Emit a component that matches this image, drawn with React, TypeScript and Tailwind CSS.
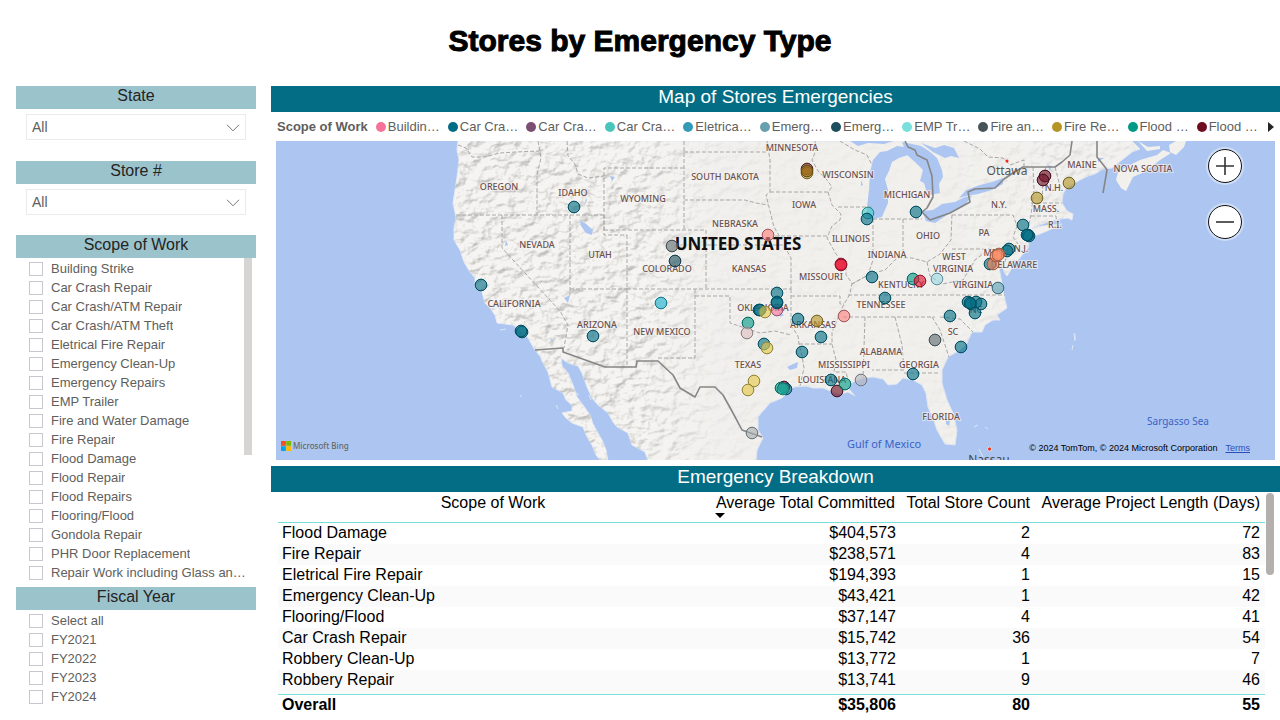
import React from "react";

type Dot = [number, number, string];
type Label = [number, number, string];

const TEAL = "#026d84";
const GOLD = "#b59525";
const YELLOW = "#e6c846";
const GREEN = "#019a86";
const NAVY = "#1b4d5c";
const WINE = "#6e0d20";
const GREY = "#5f6b6d";

const legend = [
  { name: "Buildin…", color: "#f5739a" },
  { name: "Car Cra…", color: TEAL },
  { name: "Car Cra…", color: "#7b4f71" },
  { name: "Car Cra…", color: "#4ac5bb" },
  { name: "Eletrica…", color: "#3599b8" },
  { name: "Emerg…", color: "#689fb0" },
  { name: "Emerg…", color: NAVY },
  { name: "EMP Tr…", color: "#79dfdb" },
  { name: "Fire an…", color: "#475457" },
  { name: "Fire Re…", color: GOLD },
  { name: "Flood …", color: GREEN },
  { name: "Flood …", color: WINE },
];

const scopes = [
  "Building Strike",
  "Car Crash Repair",
  "Car Crash/ATM Repair",
  "Car Crash/ATM Theft",
  "Eletrical Fire Repair",
  "Emergency Clean-Up",
  "Emergency Repairs",
  "EMP Trailer",
  "Fire and Water Damage",
  "Fire Repair",
  "Flood Damage",
  "Flood Repair",
  "Flood Repairs",
  "Flooring/Flood",
  "Gondola Repair",
  "PHR Door Replacement",
  "Repair Work including Glass an…",
];

const years = ["Select all", "FY2021", "FY2022", "FY2023", "FY2024"];

const rows = [
  ["Flood Damage", "$404,573", "2", "72"],
  ["Fire Repair", "$238,571", "4", "83"],
  ["Eletrical Fire Repair", "$194,393", "1", "15"],
  ["Emergency Clean-Up", "$43,421", "1", "42"],
  ["Flooring/Flood", "$37,147", "4", "41"],
  ["Car Crash Repair", "$15,742", "36", "54"],
  ["Robbery Clean-Up", "$13,772", "1", "7"],
  ["Robbery Repair", "$13,741", "9", "46"],
];

const labels: Label[] = [
  [499, 190, "OREGON"],
  [573, 196, "IDAHO"],
  [643, 202, "WYOMING"],
  [537, 248, "NEVADA"],
  [600, 258, "UTAH"],
  [667, 272, "COLORADO"],
  [514, 307, "CALIFORNIA"],
  [597, 328, "ARIZONA"],
  [662, 335, "NEW MEXICO"],
  [725, 180, "SOUTH DAKOTA"],
  [792, 151, "MINNESOTA"],
  [848, 178, "WISCONSIN"],
  [804, 208, "IOWA"],
  [735, 227, "NEBRASKA"],
  [749, 272, "KANSAS"],
  [821, 280, "MISSOURI"],
  [763, 311, "OKLAHOMA"],
  [748, 368, "TEXAS"],
  [813, 328, "ARKANSAS"],
  [822, 383, "LOUISIANA"],
  [844, 368, "MISSISSIPPI"],
  [881, 355, "ALABAMA"],
  [919, 368, "GEORGIA"],
  [941, 420, "FLORIDA"],
  [953, 335, "SC"],
  [976, 313, "NC"],
  [881, 308, "TENNESSEE"],
  [901, 288, "KENTUCKY"],
  [973, 288, "VIRGINIA"],
  [954, 260, "WEST"],
  [953, 272, "VIRGINIA"],
  [851, 242, "ILLINOIS"],
  [887, 258, "INDIANA"],
  [928, 239, "OHIO"],
  [907, 198, "MICHIGAN"],
  [984, 236, "PA"],
  [999, 208, "N.Y."],
  [991, 256, "MD"],
  [1021, 252, "N.J."],
  [1014, 268, "DELAWARE"],
  [1055, 228, "R.I."],
  [1046, 212, "MASS."],
  [1054, 191, "N.H."],
  [1082, 168, "MAINE"],
  [1143, 172, "NOVA SCOTIA"],
];

const dots: Dot[] = [
  [574, 207, TEAL],
  [672, 246, GREY],
  [675, 261, NAVY],
  [481, 285, TEAL],
  [522, 332, TEAL],
  [521, 331, TEAL],
  [593, 336, TEAL],
  [661, 303, "#18b0cc"],
  [807, 169, "#7a2a1c"],
  [807, 173, GOLD],
  [807, 171, "#9a6414"],
  [768, 235, "#fd8080"],
  [868, 213, "#41cdc6"],
  [867, 219, TEAL],
  [916, 212, TEAL],
  [841, 264, "#e8102e"],
  [841, 265, "#e8102e"],
  [872, 277, TEAL],
  [885, 298, TEAL],
  [913, 279, GREEN],
  [920, 281, "#e8102e"],
  [937, 279, "#9bd9e4"],
  [777, 310, "#f5739a"],
  [777, 293, TEAL],
  [777, 303, TEAL],
  [777, 302, TEAL],
  [759, 310, TEAL],
  [760, 310, TEAL],
  [765, 312, YELLOW],
  [748, 323, GREEN],
  [747, 333, "#dfbfbf"],
  [764, 344, TEAL],
  [767, 348, YELLOW],
  [798, 319, TEAL],
  [817, 321, GOLD],
  [821, 337, TEAL],
  [844, 316, "#fd8080"],
  [802, 352, TEAL],
  [754, 381, YELLOW],
  [748, 390, YELLOW],
  [784, 387, WINE],
  [786, 389, TEAL],
  [781, 388, GREEN],
  [783, 389, "#2ab5a4"],
  [831, 380, TEAL],
  [837, 391, WINE],
  [845, 384, GREEN],
  [861, 380, "#b4b4bc"],
  [752, 433, "#a8adae"],
  [913, 374, TEAL],
  [935, 340, GREY],
  [950, 316, TEAL],
  [961, 347, TEAL],
  [968, 302, TEAL],
  [976, 302, TEAL],
  [971, 304, TEAL],
  [970, 303, TEAL],
  [981, 304, TEAL],
  [975, 313, TEAL],
  [998, 288, "#5b9fb3"],
  [1023, 225, TEAL],
  [1028, 235, TEAL],
  [1029, 236, TEAL],
  [1027, 235, TEAL],
  [1009, 249, TEAL],
  [1007, 251, TEAL],
  [990, 264, TEAL],
  [993, 264, "#fd7f50"],
  [999, 254, "#fd7f50"],
  [996, 256, "#fd7f50"],
  [998, 255, "#fd9570"],
  [1045, 176, WINE],
  [1043, 180, WINE],
  [1069, 183, GOLD],
  [1037, 198, GOLD],
];

const LAND =
  "M458 141 L457 150 L459 160 L457 177 L455 190 L453 203 L456 217 L454 228 L454 240 L460 250 L464 262 L470 272 L475 278 L475 287 L482 292 L485 303 L490 308 L495 315 L497 323 L513 325 L521 331 L528 338 L535 350 L540 356 L543 363 L548 372 L552 387 L563 393 L566 400 L572 405 L572 411 L562 413 L566 418 L572 423 L583 427 L587 437 L592 445 L596 455 L601 461 L608 461 L606 450 L602 440 L598 433 L593 424 L590 415 L583 405 L577 397 L573 385 L568 373 L562 366 L561 358 L568 363 L578 366 L582 373 L587 387 L592 398 L598 405 L608 413 L613 422 L617 427 L628 433 L632 445 L645 452 L648 461 L756 461 L757 450 L763 438 L758 430 L758 417 L762 412 L770 403 L782 398 L788 392 L794 387 L806 386 L813 388 L823 388 L833 392 L840 394 L848 392 L855 396 L848 388 L853 382 L863 378 L873 377 L883 379 L888 385 L897 384 L903 378 L913 380 L922 385 L926 393 L928 407 L933 418 L937 430 L945 444 L955 445 L957 430 L953 413 L947 400 L942 383 L942 370 L948 357 L960 350 L967 343 L972 332 L982 332 L985 325 L993 320 L1000 320 L997 315 L1007 308 L1005 300 L1003 290 L1001 278 L998 262 L1001 255 L1004 272 L1007 276 L1012 268 L1010 260 L1018 260 L1028 248 L1030 238 L1047 231 L1062 224 L1042 226 L1032 228 L1050 221 L1060 219 L1068 218 L1072 220 L1073 214 L1067 211 L1062 203 L1063 194 L1067 187 L1080 180 L1088 176 L1095 174 L1103 169 L1112 168 L1122 160 L1132 152 L1140 149 L1132 141 Z";

const NOVA =
  "M1116 180 L1121 188 L1126 191 L1133 177 L1142 173 L1150 168 L1160 160 L1171 153 L1163 150 L1157 155 L1150 157 L1140 160 L1126 167 L1118 172 Z M1169 145 L1176 141 L1186 141 L1184 147 L1176 155 L1170 152 Z M1138 141 L1148 147 L1160 146 L1160 149 L1147 151 Z";

const LAKES =
  "M867 207 L869 190 L870 172 L873 160 L880 152 L887 151 L897 146 L912 148 L908 155 L899 158 L892 162 L889 171 L885 179 L888 190 L888 203 L882 217 L873 219 L867 216 Z M902 142 L912 144 L921 146 L929 151 L937 158 L942 170 L943 177 L939 184 L940 193 L930 195 L926 190 L924 183 L920 181 L923 170 L915 162 L907 155 Z M921 143 L935 148 L944 145 L954 148 L959 158 L951 156 L945 158 L933 152 Z M922 211 L933 210 L942 204 L955 202 L965 197 L972 196 L964 206 L953 211 L944 217 L935 223 L926 221 Z M959 198 L966 190 L980 185 L992 182 L1003 178 L1003 184 L992 190 L978 194 L966 196 Z M850 141 L893 141 L884 144 L868 143 L858 146 Z M861 180 L863 185 L861 186 Z M580 220 L586 224 L593 230 L592 235 L586 233 L581 226 Z M610 176 L615 177 L612 181 Z M506 240 L508 245 L505 246 Z M584 207 L587 200 L586 198 Z M564 298 L570 295 L568 303 Z M550 338 L553 340 L552 343 Z M787 367 L790 370 L797 368 L798 362 L793 364 Z M779 312 L784 315 L780 317 Z M946 419 L950 421 L949 426 L946 424 Z M1050 171 L1052 166 L1047 165 Z M1098 162 L1104 158 L1098 158 Z";

const STATES =
  "M458 145 L466 148 L472 157 L484 157 L500 153 L516 152 L539 151 M538 141 L541 158 L537 175 L537 215 M456 215 H604 M567 141 L568 156 L575 164 L578 174 L588 178 L604 176 M604 230 V168 H684 M604 215 V235 H627 M604 230 H706 V289 M684 141 V230 M684 152 H766 M684 200 H745 L756 203 L768 205 M767 141 L770 160 L770 192 L766 195 L769 207 L774 227 L780 237 M770 192 H828 L832 187 L827 180 L818 171 L812 160 L816 150 L815 141 M828 192 L832 205 L841 214 L840 220 L832 226 L827 238 L836 254 L846 266 L846 275 L852 283 L850 294 L843 306 L838 318 L832 332 L832 344 L836 360 L834 372 H846 L848 380 M838 207 H873 M775 236 H827 M707 245 H784 L791 258 V289 M570 215 V295 M502 215 V248 L560 311 L568 325 L564 348 M570 289 H627 M627 235 V367 M627 289 H791 M695 289 V358 H656 M695 296 H730 V323 L745 328 L760 333 L775 331 L791 335 M791 289 V325 L798 336 L799 344 L802 356 L804 368 L800 386 M799 344 H832 M791 296 H840 L840 304 H844 M843 317 H935 M848 295 H1005 M865 317 L863 378 M895 317 L902 345 L904 370 H872 M904 373 H940 M873 219 L873 260 L868 275 L852 284 M903 219 V255 M873 219 H922 M852 284 L870 274 L885 270 L897 258 L912 258 L927 262 L940 254 L951 240 L952 213 M952 249 H1008 L1005 262 M927 262 L930 276 L942 284 L963 280 L975 260 L988 250 M952 215 H1013 L1017 226 L1013 237 L1018 244 M1033 167 L1034 190 L1031 215 L1028 228 M1046 167 L1043 178 L1042 203 M1031 203 H1062 M1031 216 H1056 L1057 224 M932 317 L940 330 L949 357 M940 317 L960 319 L973 332 M840 141 L855 150 L867 155 L872 165 M1055 167 L1061 190 M964 141 L980 149 L988 157 L1003 158 L1010 165 L1024 160 V167";

const USBORDER =
  "M535 350 L563 348 L563 352 L605 367 H636 L637 361 H658 L673 375 L680 388 L695 397 L700 387 H715 L723 395 L733 413 L742 430 L762 437 M905 141 L908 147 L915 150 L917 155 L927 160 L932 176 L933 197 L927 208 L922 212 L930 220 L950 213 L970 202 L968 192 L975 189 L995 188 L1004 179 L1013 173 L1023 167 H1055 L1062 162 L1070 155 L1072 141 M1097 141 L1097 157 L1105 167 L1107 170 L1103 193";

function SideHeading({ children }: { children: React.ReactNode }) {
  return (
    <h2 className="h-[23px] bg-[#9bc3cc] text-center text-base leading-5 text-[#252423]">
      {children}
    </h2>
  );
}

function Slicer({ id, title }: { id: string; title: string }) {
  return (
    <section>
      <SideHeading>
        <label htmlFor={id}>{title}</label>
      </SideHeading>
      <div className="relative mx-[10px] mt-[5px]">
        <select
          id={id}
          className="h-[26px] w-full appearance-none border border-[#ebebeb] bg-white px-[5px] text-sm text-[#605e5c]"
        >
          <option>All</option>
        </select>
        <svg
          viewBox="0 0 14 8"
          className="pointer-events-none absolute top-[10px] right-[6px] h-2 w-[14px]"
          fill="none"
          stroke="#777574"
        >
          <path d="M1 .8 L7 6.8 L13 .8" />
        </svg>
      </div>
    </section>
  );
}

function CheckList({ items }: { items: string[] }) {
  return (
    <ul className="pl-[13px]">
      {items.map((item) => (
        <li key={item}>
          <label className="flex h-[19px] items-center gap-2 text-[13px] text-[#605e5c]">
            <input
              type="checkbox"
              className="size-[14px] shrink-0 appearance-none border border-[#c8c6cf] bg-white"
            />
            <span className="truncate">{item}</span>
          </label>
        </li>
      ))}
    </ul>
  );
}

function MainHeading({ children }: { children: React.ReactNode }) {
  return (
    <h2 className="h-[26px] bg-[#026d84] text-center text-[19px] leading-[22px] text-white">
      {children}
    </h2>
  );
}

function StoreMap() {
  return (
    <svg
      viewBox="276 141 999 319"
      className="block w-full"
      role="img"
      aria-label="Map of Stores Emergencies"
    >
      <defs>
        <clipPath id="land">
          <path d={LAND} />
        </clipPath>
        <linearGradient id="fade" x1="0" x2="1" y1="0" y2="0">
          <stop offset="0" stopColor="#fff" />
          <stop offset=".26" stopColor="#fff" />
          <stop offset=".36" stopColor="#333" />
          <stop offset=".62" stopColor="#111" />
          <stop offset=".8" stopColor="#666" />
          <stop offset="1" stopColor="#555" />
        </linearGradient>
        <mask id="reliefMask" maskUnits="userSpaceOnUse" x="440" y="141" width="760" height="320">
          <rect x="440" y="141" width="760" height="320" fill="url(#fade)" />
        </mask>
        <filter id="relief" x="0" y="0" width="1" height="1" colorInterpolationFilters="sRGB">
          <feTurbulence type="fractalNoise" baseFrequency=".08 .11" numOctaves="3" seed="8" />
          <feDiffuseLighting surfaceScale="4" diffuseConstant="1.2" lightingColor="#f8f7f3">
            <feDistantLight azimuth="225" elevation="58" />
          </feDiffuseLighting>
        </filter>
      </defs>
      <rect x="276" y="141" width="999" height="319" fill="#adc6f1" />
      <path d={LAND} fill="#f1f0ed" stroke="#dfe6f2" strokeWidth="1" />
      <path d={NOVA} fill="#f1f0ed" />
      <g clipPath="url(#land)">
        <g mask="url(#reliefMask)" opacity=".3">
          <rect x="440" y="141" width="760" height="320" filter="url(#relief)" />
        </g>
      </g>
      <path d={LAKES} fill="#adc6f1" />
      <path
        d="M1074 333 L1075 341 M1073 345 L1072 350 M520 396 h2 M556 405 l2 4 M500 330 l6 -1 M1075 334 v6 M985 427 l3 2 M974 427 l4 -2 M979 449 l4 8 M575 392 l4 3 M589 395 l2 5"
        fill="none"
        stroke="#dce6f6"
      />
      <path d={STATES} fill="none" stroke="#aaa8a6" strokeDasharray="4 2" strokeWidth="1" />
      <path d={USBORDER} fill="none" stroke="#868686" strokeWidth="1.6" strokeLinejoin="round" />
      <g
        className="font-['Noto_Sans',sans-serif] text-[9px] font-medium"
        textAnchor="middle"
        fill="#6b5050"
        stroke="#f4f3f0"
        strokeWidth="2"
        strokeOpacity=".7"
        paintOrder="stroke"
      >
        {labels.map(([x, y, text], i) => (
          <text key={i} x={x} y={y}>
            {text}
          </text>
        ))}
      </g>
      <g className="font-['Noto_Sans',sans-serif]" textAnchor="middle">
        <text x="738" y="250" className="text-[17px] font-bold" fill="#111">
          UNITED STATES
        </text>
        <text x="1007" y="175" className="text-xs" fill="#555">
          Ottawa
        </text>
        <text x="989" y="464" className="text-xs" fill="#444">
          Nassau
        </text>
        <text x="884" y="448" className="text-[11px]" fill="#3b62c4">
          Gulf of Mexico
        </text>
        <text x="1178" y="425" className="text-[10px]" fill="#3b62c4">
          Sargasso Sea
        </text>
      </g>
      <circle cx="1007" cy="161" r="1.5" fill="#e8301c" />
      <circle cx="989.500" cy="449" r="2" fill="#e8301c" stroke="#fff" strokeWidth=".6" />
      {dots.map(([x, y, color], i) => (
        <g key={i}>
          <circle cx={x} cy={y} r="6" fill={color} fillOpacity=".62" />
          <circle cx={x} cy={y} r="5.800" fill="none" stroke={color} />
          <circle cx={x} cy={y} r="5.800" fill="none" stroke="#0c2230" strokeOpacity=".4" />
        </g>
      ))}
    </svg>
  );
}

function ZoomButton({ label, plus }: { label: string; plus?: boolean }) {
  return (
    <button
      type="button"
      aria-label={label}
      className="flex size-[34px] items-center justify-center rounded-full border border-[#111] bg-white ring-2 ring-white/40"
    >
      <svg viewBox="0 0 18 18" className="size-[18px]" fill="none" stroke="#333" strokeWidth="1.6">
        <path d={plus ? "M0 9 H18 M9 0 V18" : "M0 9 H18"} />
      </svg>
    </button>
  );
}

export default function App() {
  return (
    <div className="min-h-screen bg-white font-['Liberation_Sans',Arial,sans-serif]">
      <h1 className="pt-[25px] text-center text-[30px] leading-8 font-bold text-black [-webkit-text-stroke:1px_#000]">
        Stores by Emergency Type
      </h1>
      <div className="mt-[29px] flex gap-[15px] pl-4">
        <aside className="w-[240px] shrink-0">
          <Slicer id="state" title="State" />
          <div className="mt-[21px]">
            <Slicer id="store" title="Store #" />
          </div>
          <section className="mt-5">
            <SideHeading>Scope of Work</SideHeading>
            <div className="relative pt-px">
              <CheckList items={scopes} />
              <div className="absolute top-0 right-1 h-[197px] w-2 bg-[#d6d5d4]" />
            </div>
          </section>
          <section className="mt-[5px]">
            <SideHeading>Fiscal Year</SideHeading>
            <div className="pt-px">
              <CheckList items={years} />
            </div>
          </section>
        </aside>

        <main className="min-w-0 flex-1">
          <section>
            <MainHeading>Map of Stores Emergencies</MainHeading>
            <div className="flex h-[29px] items-center pr-[6px] pl-[6px] text-[13px] text-[#605e5c]">
              <span className="mr-2 font-bold whitespace-nowrap">Scope of Work</span>
              <ul className="flex min-w-0 flex-1 gap-2 overflow-hidden">
                {legend.map((item, i) => (
                  <li key={i} className="flex items-center gap-[2px] whitespace-nowrap">
                    <svg viewBox="0 0 10 10" className="size-[10px]">
                      <circle cx="5" cy="5" r="5" fill={item.color} />
                    </svg>
                    {item.name}
                  </li>
                ))}
              </ul>
              <button type="button" aria-label="Next legend items">
                <svg viewBox="0 0 6 10" className="h-[10px] w-[6px]">
                  <path d="M0 0 L6 5 L0 10 Z" fill="#252423" />
                </svg>
              </button>
            </div>
            <div className="relative mr-[5px] ml-[5px]">
              <StoreMap />
              <div className="absolute top-2 right-[33px] flex flex-col gap-[22px]">
                <ZoomButton label="Zoom in" plus />
                <ZoomButton label="Zoom out" />
              </div>
              <div className="absolute bottom-[6px] left-[5px] flex items-center gap-[2px] font-['Noto_Sans',sans-serif] text-[8px] leading-4 font-medium text-[#666]">
                <svg viewBox="0 0 10 10" className="size-[10px]">
                  <path d="M0 0h4.800v4.800H0z" fill="#f25022" />
                  <path d="M5.200 0H10v4.800H5.200z" fill="#7fba00" />
                  <path d="M0 5.200h4.800V10H0z" fill="#00a4ef" />
                  <path d="M5.200 5.200H10V10H5.200z" fill="#ffb900" />
                </svg>
                Microsoft Bing
              </div>
              <div className="absolute right-[25px] bottom-1 flex gap-2 text-[9px] leading-4 text-black">
                <span>© 2024 TomTom, © 2024 Microsoft Corporation</span>
                <a href="#terms" className="text-[#2a50b8] underline">
                  Terms
                </a>
              </div>
            </div>
          </section>

          <section className="mt-[6px]">
            <MainHeading>Emergency Breakdown</MainHeading>
            <div className="flex items-start">
              <div className="min-w-0 flex-1 pl-[7px]">
                <table className="w-full border-separate border-spacing-0 text-base leading-5 text-black">
                  <thead>
                    <tr className="h-[31px] align-top whitespace-nowrap">
                      <th className="border-b border-[#79dfdb] px-1 pt-px font-normal">
                        Scope of Work
                      </th>
                      <th className="w-[193px] border-b border-[#79dfdb] pt-px pr-[6px] pl-1 text-right font-normal">
                        Average Total Committed
                        <svg viewBox="0 0 10 5" className="ml-[3px] block h-[5px] w-[10px]">
                          <path d="M0 0 H10 L5 5 Z" fill="#000" />
                        </svg>
                      </th>
                      <th className="w-[134px] border-b border-[#79dfdb] px-[5px] pt-px text-right font-normal">
                        Total Store Count
                      </th>
                      <th className="w-[230px] border-b border-[#79dfdb] px-[5px] pt-px text-right font-normal">
                        Average Project Length (Days)
                      </th>
                    </tr>
                  </thead>
                  <tbody>
                    {rows.map((row) => (
                      <tr
                        key={row[0]}
                        className="h-[21px] align-top last:h-6 even:bg-[#fafafa]"
                      >
                        {row.map((cell, i) => (
                          <td
                            key={i}
                            className={i === 0 ? "px-1" : "px-[5px] text-right"}
                          >
                            {cell}
                          </td>
                        ))}
                      </tr>
                    ))}
                  </tbody>
                  <tfoot>
                    <tr className="font-bold">
                      <td className="border-t border-[#79dfdb] px-1">Overall</td>
                      <td className="border-t border-[#79dfdb] px-[5px] text-right">$35,806</td>
                      <td className="border-t border-[#79dfdb] px-[5px] text-right">80</td>
                      <td className="border-t border-[#79dfdb] px-[5px] text-right">55</td>
                    </tr>
                  </tfoot>
                </table>
              </div>
              <div className="mt-px mr-[6px] ml-px h-[82px] w-2 rounded-full bg-[#b3b0ad]" />
            </div>
          </section>
        </main>
      </div>
    </div>
  );
}
